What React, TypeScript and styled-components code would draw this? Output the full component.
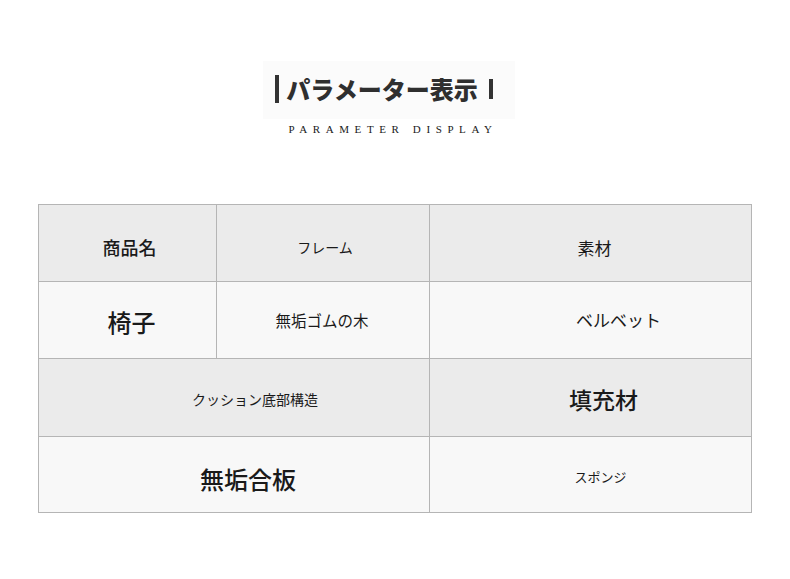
import React from "react";
import styled, { createGlobalStyle } from "styled-components";

const Global = createGlobalStyle`
  html, body { margin: 0; padding: 0; background: #ffffff; }
  body { font-family: "Noto Sans CJK JP", "Noto Sans", sans-serif; }
`;

const Page = styled.div`
  width: 790px;
  height: 579px;
  background: #ffffff;
  display: flex;
  flex-direction: column;
  align-items: center;
`;

const TitleBox = styled.div`
  margin-top: 61px;
  margin-right: 12px;
  width: 252px;
  height: 58px;
  box-sizing: border-box;
  padding: 0 10px 3px 0;
  background: #fbfbfb;
  display: flex;
  align-items: center;
  justify-content: center;
`;

const Title = styled.h1`
  margin: 0;
  font-family: "Noto Sans CJK JP", sans-serif;
  font-weight: 900;
  font-size: 24px;
  line-height: 36px;
  color: #2f2f2f;
  white-space: nowrap;
  display: flex;
  align-items: center;
`;

const Bar = styled.span<{ $h: number; $gapL: number; $gapR: number }>`
  display: inline-block;
  width: 4px;
  height: ${(p) => p.$h}px;
  background: #333333;
  margin-left: ${(p) => p.$gapL}px;
  margin-right: ${(p) => p.$gapR}px;
`;

const Subtitle = styled.div`
  margin-top: 3px;
  margin-right: 4px;
  font-family: "Liberation Serif", serif;
  font-size: 11px;
  line-height: 14px;
  letter-spacing: 5.6px;
  color: #1a1a1a;
`;

const Table = styled.div`
  margin-top: 68px;
  align-self: flex-start;
  margin-left: 38px;
  display: grid;
  grid-template-columns: 177px 212px 321px;
  grid-template-rows: 76px 76px 77px 75px;
  gap: 1px;
  background: #b5b5b5;
  border: 1px solid #b5b5b5;
`;

const Cell = styled.div<{ $head?: boolean; $span?: number; $size: number; $dx?: number; $dy?: number; $weight?: number }>`
  grid-column: span ${(p) => p.$span ?? 1};
  background: ${(p) => (p.$head ? "#ebebeb" : "#f8f8f8")};
  display: flex;
  align-items: center;
  justify-content: center;
  font-family: "Noto Sans CJK JP", sans-serif;
  font-size: ${(p) => p.$size}px;
  font-weight: ${(p) => p.$weight ?? 400};
  color: #1a1a1a;
  padding-left: ${(p) => Math.max(0, (p.$dx ?? 0) * 2)}px;
  padding-right: ${(p) => Math.max(0, -(p.$dx ?? 0) * 2)}px;
  padding-top: ${(p) => Math.max(0, (p.$dy ?? 0) * 2)}px;
  padding-bottom: ${(p) => Math.max(0, -(p.$dy ?? 0) * 2)}px;
`;

export default function App() {
  return (
    <Page>
      <Global />
      <TitleBox>
        <Title>
          <Bar $h={28} $gapL={0} $gapR={7} />
          パラメーター表示
          <Bar $h={20} $gapL={11} $gapR={0} />
        </Title>
      </TitleBox>
      <Subtitle>PARAMETER DISPLAY</Subtitle>
      <Table>
        <Cell $head $size={18} $dx={2} $dy={4} $weight={500}>商品名</Cell>
        <Cell $head $size={14} $dx={2} $dy={4}>フレーム</Cell>
        <Cell $head $size={17} $dx={4} $dy={4}>素材</Cell>
        <Cell $size={24} $dx={4} $dy={1} $weight={500}>椅子</Cell>
        <Cell $size={15.5} $dx={-1} $dy={0}>無垢ゴムの木</Cell>
        <Cell $size={17} $dx={28} $dy={-1}>ベルベット</Cell>
        <Cell $head $span={2} $size={14} $dx={21} $dy={1}>クッション底部構造</Cell>
        <Cell $head $size={23} $dx={13} $dy={1} $weight={500}>填充材</Cell>
        <Cell $span={2} $size={24} $dx={14} $dy={4} $weight={500}>無垢合板</Cell>
        <Cell $size={13} $dx={10} $dy={2}>スポンジ</Cell>
      </Table>
    </Page>
  );
}
